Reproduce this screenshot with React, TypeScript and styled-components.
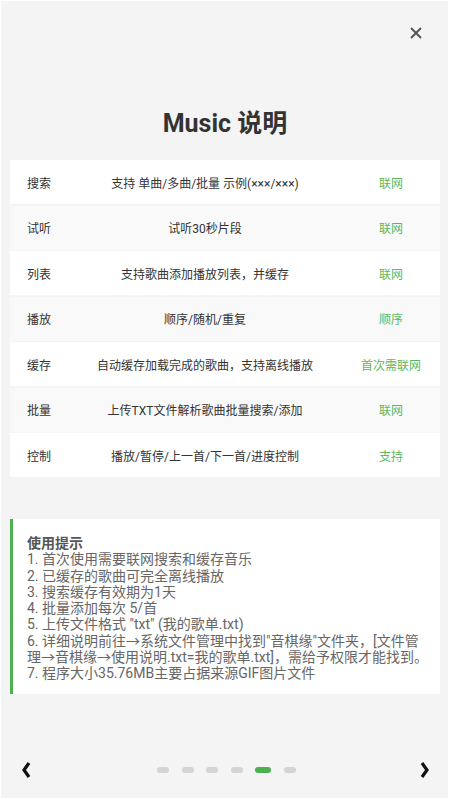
import React from "react";
import styled, { createGlobalStyle } from "styled-components";

const GlobalStyle = createGlobalStyle`
    html, body {
        margin: 0;
        padding: 0;
        background: #ffffff;
    }
    body {
        font-family: Roboto, "Noto Sans CJK SC", sans-serif;
    }
`;

type Feature = {
    name: string;
    desc: string;
    status: string;
};

const features: Feature[] = [
    { name: "搜索", desc: "支持 单曲/多曲/批量 示例(×××/×××)", status: "联网" },
    { name: "试听", desc: "试听30秒片段", status: "联网" },
    { name: "列表", desc: "支持歌曲添加播放列表，并缓存", status: "联网" },
    { name: "播放", desc: "顺序/随机/重复", status: "顺序" },
    { name: "缓存", desc: "自动缓存加载完成的歌曲，支持离线播放", status: "首次需联网" },
    { name: "批量", desc: "上传TXT文件解析歌曲批量搜索/添加", status: "联网" },
    { name: "控制", desc: "播放/暂停/上一首/下一首/进度控制", status: "支持" },
];

const tips = [
    "1. 首次使用需要联网搜索和缓存音乐",
    "2. 已缓存的歌曲可完全离线播放",
    "3. 搜索缓存有效期为1天",
    "4. 批量添加每次 5/首",
    '5. 上传文件格式 "txt" (我的歌单.txt)',
    '6. 详细说明前往→系统文件管理中找到"音棋缘"文件夹，[文件管理→音棋缘→使用说明.txt=我的歌单.txt]，需给予权限才能找到。',
    "7. 程序大小35.76MB主要占据来源GIF图片文件",
];

const Page = styled.div`
    box-sizing: border-box;
    margin: 1px 2px 1px 1px;
    min-height: 797px;
    background: #f4f4f4;
    display: flex;
    flex-direction: column;
    padding: 0 8px 19px 9px;
`;

const CloseRow = styled.div`
    display: flex;
    justify-content: flex-end;
    padding: 26px 18px 0 0;
    height: 12px;
`;

const CloseButton = styled.button`
    border: none;
    background: none;
    padding: 0;
    width: 12px;
    height: 12px;
    display: flex;
`;

const Title = styled.h1`
    margin: 71px 0 22px;
    text-align: center;
    font-size: 25px;
    line-height: 28px;
    font-weight: 700;
    color: #333333;
`;

const Table = styled.div`
    display: flex;
    flex-direction: column;
    gap: 1.5px;
`;

const Row = styled.div<{ $alt: boolean }>`
    display: grid;
    grid-template-columns: 58px 274px 1fr;
    align-items: center;
    height: 44px;
    background: ${(p) => (p.$alt ? "#f9f9f9" : "#ffffff")};
    font-size: 12px;
    color: #333333;
`;

const Name = styled.div`
    padding-left: 17px;
`;

const Desc = styled.div`
    text-align: center;
`;

const Status = styled.div`
    text-align: center;
    color: #5cb85c;
`;

const TipBox = styled.div`
    margin-top: 42px;
    background: #ffffff;
    border-left: 3px solid #4caf50;
    padding: 16px 12px 12px 14px;
    color: #666666;
    font-size: 14px;
    line-height: 16.3px;
`;

const TipTitle = styled.div`
    font-size: 14px;
    font-weight: 700;
    color: #555555;
`;

const TipLine = styled.div``;

const Pager = styled.div`
    margin-top: auto;
    display: flex;
    align-items: center;
    justify-content: space-between;
    padding: 0 10px 0 11px;
    height: 18px;
`;

const Arrow = styled.button`
    border: none;
    background: none;
    padding: 0;
    width: 10px;
    height: 18px;
    display: flex;
`;

const Dots = styled.div`
    display: flex;
    align-items: center;
    gap: 12.5px;
    margin-left: 2px;
`;

const Dot = styled.span<{ $active: boolean }>`
    display: block;
    width: ${(p) => (p.$active ? "16px" : "12px")};
    height: 6px;
    border-radius: 3px;
    background: ${(p) => (p.$active ? "#4caf50" : "#d4d4d4")};
`;

const App = () => {
    return (
        <>
            <GlobalStyle />
            <Page>
                <CloseRow>
                    <CloseButton>
                        <svg width="12" height="12" viewBox="0 0 12 12">
                            <path d="M1 1 L11 11 M11 1 L1 11" stroke="#555" strokeWidth="2" />
                        </svg>
                    </CloseButton>
                </CloseRow>
                <Title>Music 说明</Title>
                <Table>
                    {features.map((f, i) => (
                        <Row key={f.name} $alt={i % 2 === 1}>
                            <Name>{f.name}</Name>
                            <Desc>{f.desc}</Desc>
                            <Status>{f.status}</Status>
                        </Row>
                    ))}
                </Table>
                <TipBox>
                    <TipTitle>使用提示</TipTitle>
                    {tips.map((t) => (
                        <TipLine key={t}>{t}</TipLine>
                    ))}
                </TipBox>
                <Pager>
                    <Arrow>
                        <svg width="10" height="18" viewBox="0 0 10 18">
                            <path d="M8 2 L3 9 L8 16" stroke="#111" strokeWidth="3.2" fill="none" strokeLinejoin="miter" />
                        </svg>
                    </Arrow>
                    <Dots>
                        {[0, 1, 2, 3, 4, 5].map((i) => (
                            <Dot key={i} $active={i === 4} />
                        ))}
                    </Dots>
                    <Arrow>
                        <svg width="10" height="18" viewBox="0 0 10 18">
                            <path d="M2 2 L7 9 L2 16" stroke="#111" strokeWidth="3.2" fill="none" strokeLinejoin="miter" />
                        </svg>
                    </Arrow>
                </Pager>
            </Page>
        </>
    );
};

export default App;
